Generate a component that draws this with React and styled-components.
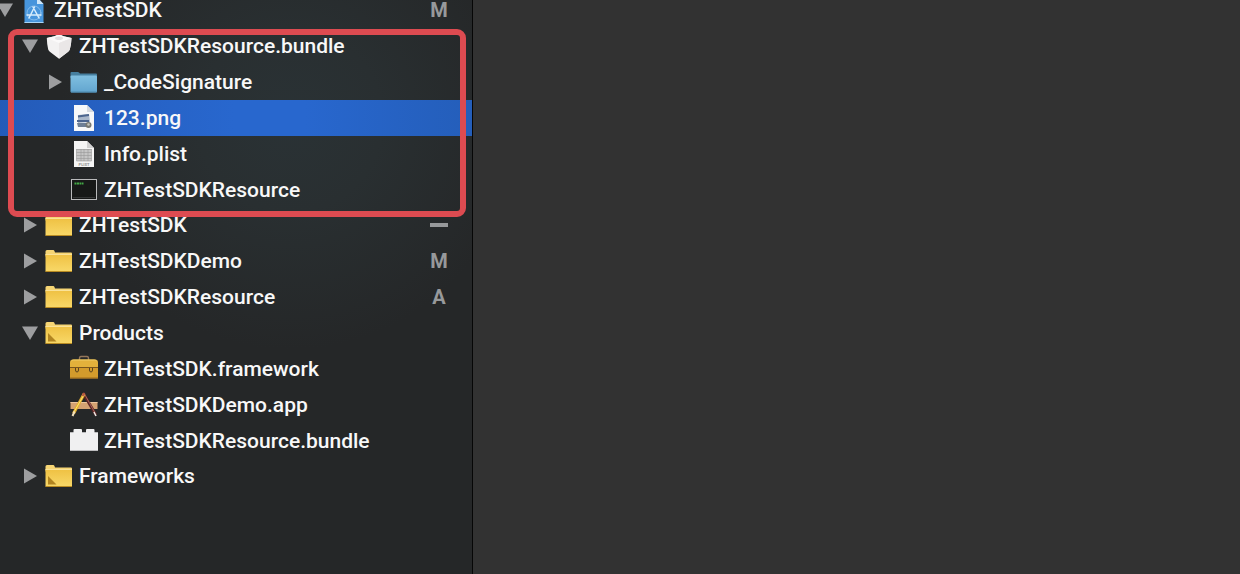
import React, { useState } from 'react'
import styled, { createGlobalStyle } from 'styled-components'

const GlobalStyle = createGlobalStyle`
  body {
    margin: 0;
    background: #323232;
    font-family: Roboto, "Liberation Sans", sans-serif;
  }
`

const Window = styled.div`
  display: flex;
  min-height: 100vh;
`

const Navigator = styled.nav`
  flex: none;
  width: 472px;
  max-width: 60%;
  overflow: hidden;
  border-right: 1px solid #060606;
  background: radial-gradient(ellipse 230px 230px at 290px 120px, #2a3235 0%, #292f31 40%, #252728 100%);
`

const Editor = styled.main`
  flex: 1;
  background: #323232;
`

const Tree = styled.ul`
  list-style: none;
  margin: -8px 0 0 -5px;
  padding: 0;
`

const SubTree = styled.ul`
  list-style: none;
  margin: 0 0 -1px;
  padding: 0;
`

const Item = styled.li`
  position: relative;
`

const Row = styled.div`
  display: flex;
  align-items: center;
  height: 36px;
  box-sizing: border-box;
  padding: 0 21px 0 ${props => props.$level * 25}px;
  background: ${props => props.$selected ? 'linear-gradient(to right, #245bb8 0%, #2867ce 50%, #2867ce 65%, #245eba 100%)' : 'none'};
`

const Toggle = styled.button`
  display: flex;
  align-items: center;
  justify-content: center;
  width: 20px;
  height: 20px;
  margin-right: 5px;
  padding: 0;
  border: 0;
  background: none;
  color: #9d9ea0;
`

const ToggleSpace = styled.span`
  width: 25px;
`

const Name = styled.span`
  flex: 1;
  margin-left: 6px;
  font-size: 21px;
  font-weight: 500;
  line-height: 20px;
  white-space: nowrap;
  color: #f8f8f8;
`

const Status = styled.span`
  width: 24px;
  font-size: 20px;
  font-weight: 700;
  line-height: 20px;
  text-align: center;
  color: #97999b;
`

const MixedStatus = styled.span`
  width: 18px;
  height: 4px;
  margin: 0 3px;
  background: #97999b;
`

// red outline drawn over the bundle and its files
const Marker = styled.div`
  position: absolute;
  top: 1px;
  right: 6px;
  bottom: -9px;
  left: 13px;
  z-index: 1;
  border: 6px solid #dd4b51;
  border-radius: 9px;
  pointer-events: none;
`

const Glyph = styled.svg`
  flex: none;
  display: block;
  width: 28px;
  height: 28px;
`

const Arrow = ({ open }) => (
  <svg width="16" height="16" viewBox="0 0 16 16" fill="currentColor" aria-hidden="true">
    {open ? <path d="M0 1.5h16L8 15z" /> : <path d="M2 0.5v15L15 8z" />}
  </svg>
)

const Folder = ({ corner }) => (
  <Glyph viewBox="0 0 28 28">
    <defs>
      <linearGradient id="folder" x1="0" y1="0" x2="0" y2="1">
        <stop offset="0" stopColor="#efc143" />
        <stop offset="1" stopColor="#f8d868" />
      </linearGradient>
    </defs>
    <path d="M0.5 4.5q0-1.500 1.500-1.500h6.500q1 0 1.500 2.500h16q1 0 1 1v3h-26.500z" fill="#f6d574" />
    <path d="M0.500 7.500h26.500v17h-26.500z" fill="url(#folder)" />
    <path d="M0.500 7.500h26.500" stroke="#fae298" />
    <path d="M0.500 24.500h26.500" stroke="#b98b22" />
    {corner && <path d="M3 14l8.500 8.500H3z" fill="#b18420" />}
  </Glyph>
)

const BlueFolder = () => (
  <Glyph viewBox="0 0 28 28">
    <defs>
      <linearGradient id="blue" x1="0" y1="0" x2="0" y2="1">
        <stop offset="0" stopColor="#80bfe0" />
        <stop offset="1" stopColor="#62a5cf" />
      </linearGradient>
    </defs>
    <path d="M0.500 5q0-1 1-1H8q1 0 2 1.500h16q1 0 1 1V10H0.500z" fill="#467f9f" />
    <rect x="0.500" y="7.500" width="26.500" height="17" rx="1" fill="url(#blue)" />
    <path d="M1 24h25.500" stroke="#4a88ad" />
  </Glyph>
)

const Project = () => (
  <Glyph viewBox="0 0 28 28">
    <path d="M4.500 1H17l6.500 7v19h-19z" fill="#4795dc" />
    <path d="M17 1l6.500 7H17z" fill="#cfe7f9" />
    <path d="M4.500 26.500h19" stroke="#a9d4f5" />
    <g fill="none" stroke="#d7edfc" strokeWidth="1.500" strokeLinecap="round">
      <path d="M14.500 11L9 22M13 11l6 11M7 19h14" />
      <circle cx="14" cy="17" r="7" strokeWidth="0.700" opacity="0.600" />
    </g>
  </Glyph>
)

const Shield = () => (
  <Glyph viewBox="0 0 28 28">
    <path d="M14 3q2.500 0 4.500 1.200L26.500 6q-0.200 7-1.700 11.500Q24.300 19 22.500 20.300L14 26.800l-8.500-6.500Q3.700 19 3.200 17.500 2 13 1.800 6l7.700-1.800Q11.500 3 14 3z" fill="#f3f2f2" />
    <path d="M1.800 6l7.700-1.800Q11.500 3 14 3t4.500 1.200L26.500 6 14 11z" fill="#fbfafa" />
    <path d="M14 11v15.800l8.500-6.500q1.800-1.300 2.300-2.800Q26.300 13 26.500 6z" fill="#eae7e7" />
    <ellipse cx="14" cy="6.200" rx="4" ry="1.800" fill="#e1dfdf" />
  </Glyph>
)

const ImageFile = () => (
  <Glyph viewBox="0 0 28 28">
    <path d="M4 1h13l7 7v19H4z" fill="#f7f8f9" />
    <path d="M17 1l7 7h-7z" fill="#d5d9df" />
    <path d="M8 11l11-1 1 8-12 1z" fill="#a9b7ca" />
    <path d="M8 12.500l11-1.500M7 17h12" stroke="#4c658e" strokeWidth="1.800" />
    <path d="M7 19h12v4H8z" fill="#6e7f95" />
    <circle cx="18.500" cy="21" r="3" fill="#777872" />
    <circle cx="18.500" cy="20.500" r="1.300" fill="#c4c5bd" />
  </Glyph>
)

const PlistFile = () => (
  <Glyph viewBox="0 0 28 28">
    <path d="M4 1h13l7 7v19H4z" fill="#f5f5f5" />
    <path d="M17 1l7 7h-7z" fill="#d2d2d2" />
    <rect x="6.500" y="9" width="15" height="12" fill="#c6c6c6" />
    <path d="M6.500 9.500h15M6.500 12.500h15M6.500 15.500h15M6.500 18.500h15M6.500 21h15M6.500 9v12M11 9v12M14 9v12M18 9v12M21.500 9v12" stroke="#999" strokeWidth="0.600" />
    <text x="14" y="26" fontSize="4" fontWeight="700" textAnchor="middle" fill="#929292">PLIST</text>
  </Glyph>
)

const Executable = () => (
  <Glyph viewBox="0 0 28 28">
    <rect x="1.500" y="3.500" width="25" height="20" fill="#171918" stroke="#b9babb" />
    <path d="M3 21.500h22" stroke="#333535" />
    <path d="M4.500 7.500h9" stroke="#42a844" strokeWidth="2" strokeDasharray="2 0.500" />
  </Glyph>
)

const Toolbox = () => (
  <Glyph viewBox="0 0 28 28">
    <path d="M9.500 5V3.500Q9.500 1.500 11 1.500h6q1.500 0 1.500 2V5" fill="none" stroke="#94765a" strokeWidth="1.400" />
    <path d="M0 14V7.500q0-3 3-3h22q3 0 3 3V14z" fill="#e3b13b" />
    <path d="M1.500 6q1-1 2-1h21q1 0 2 1" fill="none" stroke="#f1ce69" />
    <path d="M0 13h28v10.500H0z" fill="#d39b2c" />
    <path d="M0 12.500h28" stroke="#79551c" />
    <path d="M0 23h28" stroke="#9b691c" />
    <path d="M5.500 13v2q0 2 1.500 2t1.500-2v-2M19.500 13v2q0 2 1.500 2t1.500-2v-2" fill="none" stroke="#5b431d" />
  </Glyph>
)

const AppIcon = () => (
  <Glyph viewBox="0 0 28 28">
    <rect x="0.500" y="11" width="27" height="7" fill="#d4a272" />
    <path d="M0.500 11.500h27" stroke="#ebc59c" />
    <path d="M13 2l13 22" stroke="#5b2525" strokeWidth="2.800" />
    <path d="M14.500 3l10 18" stroke="#ba7466" strokeWidth="0.800" />
    <path d="M24 21l2 4" stroke="#eeeae6" strokeWidth="1.600" />
    <path d="M14 3L3.500 22.500" stroke="#e4ac32" strokeWidth="3" />
    <path d="M13.500 4.500L4 21" stroke="#fbe86b" />
    <path d="M4.500 20.500l-2 4.500" stroke="#f1dfbd" strokeWidth="2" />
    <path d="M12.500 5l2-3" stroke="#b55445" strokeWidth="2" />
  </Glyph>
)

const Brick = () => (
  <Glyph viewBox="0 0 28 28">
    <path d="M0 5h3.500V3q0-1 1-1H11q1 0 1 1v2h4V3q0-1 1-1h6.500q1 0 1 1v2H28v19H0z" fill="#f0f0f1" />
    <path d="M0 5.500h3.500M12 5.500h4M24.500 5.500H28M0 23.500h28" stroke="#bcbcbe" />
  </Glyph>
)

const project = {
  name: 'ZHTestSDK', icon: <Project />, status: 'M', children: [
    {
      name: 'ZHTestSDKResource.bundle', icon: <Shield />, marked: true, children: [
        { name: '_CodeSignature', icon: <BlueFolder />, folder: true },
        { name: '123.png', icon: <ImageFile />, selected: true },
        { name: 'Info.plist', icon: <PlistFile /> },
        { name: 'ZHTestSDKResource', icon: <Executable /> },
      ],
    },
    { name: 'ZHTestSDK', icon: <Folder />, folder: true, status: 'mixed' },
    { name: 'ZHTestSDKDemo', icon: <Folder />, folder: true, status: 'M' },
    { name: 'ZHTestSDKResource', icon: <Folder />, folder: true, status: 'A' },
    {
      name: 'Products', icon: <Folder corner />, children: [
        { name: 'ZHTestSDK.framework', icon: <Toolbox /> },
        { name: 'ZHTestSDKDemo.app', icon: <AppIcon /> },
        { name: 'ZHTestSDKResource.bundle', icon: <Brick /> },
      ],
    },
    { name: 'Frameworks', icon: <Folder corner />, folder: true },
  ],
}

const Node = ({ node, level }) => {
  const [open, setOpen] = useState(!!node.children)

  return (
    <Item>
      <Row $level={level} $selected={node.selected}>
        {node.children || node.folder ? (
          <Toggle type="button" aria-label={node.name} aria-expanded={open} onClick={() => setOpen(!open)}>
            <Arrow open={open} />
          </Toggle>
        ) : <ToggleSpace />}
        {node.icon}
        <Name>{node.name}</Name>
        {node.status === 'mixed' && <MixedStatus />}
        {node.status && node.status !== 'mixed' && <Status>{node.status}</Status>}
      </Row>
      {open && node.children && (
        <SubTree>
          {node.children.map(child => <Node key={child.name} node={child} level={level + 1} />)}
        </SubTree>
      )}
      {node.marked && <Marker />}
    </Item>
  )
}

const App = () => (
  <Window>
    <GlobalStyle />
    <Navigator>
      <Tree>
        <Node node={project} level={0} />
      </Tree>
    </Navigator>
    <Editor />
  </Window>
)

export default App
